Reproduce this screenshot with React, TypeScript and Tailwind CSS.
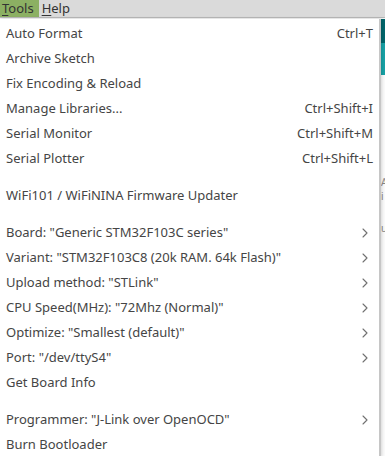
import { ChevronRight } from "lucide-react";

type Item =
  | { kind: "item"; label: string; shortcut?: string; sub?: boolean }
  | { kind: "sep" };

const items: Item[] = [
  { kind: "item", label: "Auto Format", shortcut: "Ctrl+T" },
  { kind: "item", label: "Archive Sketch" },
  { kind: "item", label: "Fix Encoding & Reload" },
  { kind: "item", label: "Manage Libraries...", shortcut: "Ctrl+Shift+I" },
  { kind: "item", label: "Serial Monitor", shortcut: "Ctrl+Shift+M" },
  { kind: "item", label: "Serial Plotter", shortcut: "Ctrl+Shift+L" },
  { kind: "sep" },
  { kind: "item", label: "WiFi101 / WiFiNINA Firmware Updater" },
  { kind: "sep" },
  { kind: "item", label: 'Board: "Generic STM32F103C series"', sub: true },
  { kind: "item", label: 'Variant: "STM32F103C8 (20k RAM. 64k Flash)"', sub: true },
  { kind: "item", label: 'Upload method: "STLink"', sub: true },
  { kind: "item", label: 'CPU Speed(MHz): "72Mhz (Normal)"', sub: true },
  { kind: "item", label: 'Optimize: "Smallest (default)"', sub: true },
  { kind: "item", label: 'Port: "/dev/ttyS4"', sub: true },
  { kind: "item", label: "Get Board Info" },
  { kind: "sep" },
  { kind: "item", label: 'Programmer: "J-Link over OpenOCD"', sub: true },
  { kind: "item", label: "Burn Bootloader" },
];

export default function App() {
  return (
    <div
      className="relative h-[456px] w-[385px] overflow-hidden bg-[#f4f4f4] text-[13px] text-[#454545]"
      style={{ fontFamily: '"Noto Sans", "DejaVu Sans", sans-serif' }}
    >
      {/* menubar */}
      <div className="flex h-[18px] items-stretch border-b border-[#b8b8b8] bg-[#dadada] leading-[17px] text-[#333]">
        <div className="bg-[#8cb063] pl-[2px] pr-[5px]">
          <span className="underline underline-offset-2">T</span>ools
        </div>
        <div className="pl-[3px]">
          <span className="underline underline-offset-2">H</span>elp
        </div>
      </div>

      {/* editor behind the menu */}
      <div className="absolute right-0 top-[19px] flex w-[6px] flex-col">
        <div className="h-[24px] bg-[#00656a]" />
        <div className="h-[32px] bg-[#17a1a5]" />
        <div className="h-[400px] bg-[#fbfbfb] pl-[2px] text-[10px] leading-[14px] text-[#888]">
          <div className="h-[100px]" />
          <div>A</div>
          <div>i</div>
          <div className="mt-[18px]">u</div>
        </div>
      </div>

      {/* dropdown */}
      <div className="absolute left-0 top-[19px] w-[381px] border-r-2 border-[#c6c6c6] bg-white pt-[2px] shadow-[1px_0_3px_rgba(0,0,0,0.15)]">
        {items.map((it, i) =>
          it.kind === "sep" ? (
            <div key={i} className="h-[12px]" />
          ) : (
            <div key={i} className="flex h-[25px] items-center justify-between pl-[6px] pr-[6px]">
              <span>{it.label}</span>
              {it.shortcut && <span>{it.shortcut}</span>}
              {it.sub && (
                <ChevronRight className="h-[16px] w-[16px] text-[#707070]" strokeWidth={1.6} />
              )}
            </div>
          )
        )}
      </div>
    </div>
  );
}
